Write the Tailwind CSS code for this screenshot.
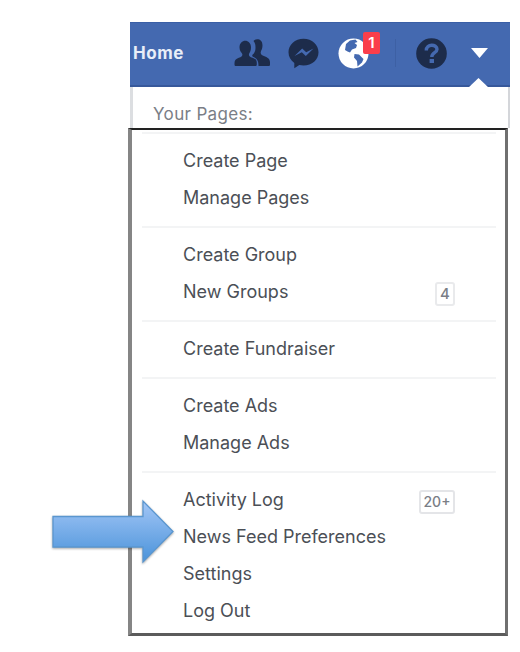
<!DOCTYPE html>
<html lang="en">
<head>
  <meta charset="UTF-8">
  <title>Account Menu</title>
  <script src="https://cdn.jsdelivr.net/npm/@tailwindcss/browser@4"></script>
</head>
<body class="bg-white h-[652px] overflow-hidden relative font-['Inter',sans-serif] text-[#4b4f56]">
  <div class="ml-[128px] pt-[22px] w-[382px]">

    <!-- Top bar -->
    <header class="relative ml-[2px] h-[65px] bg-[#4469b0] border-t border-b-2 border-t-[#3a5fa6] border-b-[#37589a]">
      <div class="flex items-center h-[60px]">
        <span class="ml-[3px] mt-[2px] w-[101px] text-[17px] font-bold tracking-[0.5px] text-[#e9eef8]">Home</span>
        <svg class="w-[36px] h-[30px]" viewBox="0 0 36 30" fill="#1d2c4b">
          <path d="M19.500 3C22 .2 28.500.5 28.500 7.500c0 3.500-1.400 5-1.800 6.500-.2 2.400.8 3 3.800 4.200 3.300 1.300 5.500 2.800 5.500 6.300v2c0 1-.6 1.500-1.500 1.500H24.500c0-5-1-7.500-6-9.500l-.3-1.500c2.200-1.500 3.300-4 3.300-7.500 0-3-.6-5-2-6.500z"/>
          <path d="M5.500 9.500c0-9 11.500-9 11.500 0 0 3.500-1.300 5-2 6.500-.3 2 .7 2.600 3.500 3.700 3 1.200 4.300 2.300 4.300 5.300v1.500c0 1-.6 1.500-1.500 1.500H2c-.9 0-1.500-.5-1.500-1.500V25c0-3 1.300-4.100 4.300-5.300 2.800-1.100 3.800-1.700 3.500-3.700-.8-1.500-2.800-3-2.800-6.500z"/>
        </svg>
        <svg class="ml-[18px] w-[31px] h-[31px]" viewBox="0 0 31 31">
          <path fill="#1d2c4b" d="M15.500.8C7 .8.500 6.700.500 14.300c0 4.400 2.200 8.100 5.800 10.700v5.300l5-3.300c1.300.3 2.700.5 4.200.5 8.500 0 15-5.900 15-13.300S24 .8 15.500.8z"/>
          <path fill="#4469b0" d="M6.500 18l7.700-7.500 4 3.700 7.300-3.700-7.700 7.500-4-3.700z"/>
        </svg>
        <div class="relative ml-[19px] w-[31px] h-[31px]">
          <svg class="w-[31px] h-[31px]" viewBox="0 0 31 31">
            <circle cx="15.500" cy="15.500" r="15" fill="#fff"/>
            <path fill="#4469b0" d="M8 6l4-3.500 5.500-1 2 2.500-3 1 2.500 2-1 3-4 1.500-2 3-2.500-1L7 12zM16.500 16l4.500.5 4.500 4.500-1.500 3.500-4.500 4-.5-5.500-3-3.500z"/>
          </svg>
          <span class="absolute left-[25px] -top-[6px] w-[17px] h-[22px] rounded-[2px] bg-[#fa3e4b] text-white text-[15px] leading-[21px] font-semibold text-center">1</span>
        </div>
        <span class="ml-[26px] w-px h-[28px] bg-[#3d60a4]"></span>
        <svg class="ml-[20px] w-[31px] h-[31px]" viewBox="0 0 31 31">
          <circle cx="15.500" cy="15.500" r="15.300" fill="#1d2c4b"/>
          <path fill="none" stroke="#4469b0" stroke-width="3.400" d="M10.300 12.500c0-7 10.700-6.500 10.700-1.200 0 3.700-5.200 3.200-5.200 7.700"/>
          <rect x="13.600" y="21" width="4.400" height="4" fill="#4469b0"/>
        </svg>
        <svg class="ml-[24px] w-[17px] h-[10px]" viewBox="0 0 17 10" fill="#fff"><path d="M0 0h17L8.500 10z"/></svg>
      </div>
      <svg class="absolute left-[338px] top-[55px] w-[21px] h-[10px]" viewBox="0 0 21 10" fill="#fff"><path d="M0 10L10.500 0 21 10z"/></svg>
    </header>

    <div class="ml-[2px] h-[41px] border-l-[3px] border-r-[2px] border-l-[#dcdee1] border-r-[#d4d6da] pl-[20px] pt-[15px]">
      <p class="text-[17px] leading-[24px] tracking-[0.35px] text-[#7a7e86]">Your Pages:</p>
    </div>

    <!-- Menu -->
    <nav class="w-[380px] h-[508px] border-t-2 border-l-[4px] border-b-[3px] border-r-[3px] border-t-[#222] border-l-[#858585] border-b-[#5b5b5b] border-r-[#707070] pt-[2px] pl-[10px] pr-[9px] text-[18px] leading-[37px]">
      <ul class="border-t-2 border-[#f3f4f5] pt-[8px] pb-[10px] pl-[41px] pr-[41px]">
        <li>Create Page</li>
        <li>Manage Pages</li>
      </ul>
      <ul class="border-t-2 border-[#f3f4f5] pt-[8px] pb-[10px] pl-[41px] pr-[41px]">
        <li>Create Group</li>
        <li class="flex items-center justify-between">New Groups
          <span class="mt-[4px] w-[20px] h-[24px] border-2 border-[#e9eaec] rounded-[3px] text-[15px] leading-[20px] font-medium text-center text-[#7a7e86]">4</span>
        </li>
      </ul>
      <ul class="border-t-2 border-[#f3f4f5] pt-[8px] pb-[10px] pl-[41px]">
        <li>Create Fundraiser</li>
      </ul>
      <ul class="border-t-2 border-[#f3f4f5] pt-[8px] pb-[10px] pl-[41px]">
        <li>Create Ads</li>
        <li>Manage Ads</li>
      </ul>
      <ul class="border-t-2 border-[#f3f4f5] pt-[8px] pb-[10px] pl-[41px] pr-[41px]">
        <li class="flex items-center justify-between">Activity Log
          <span class="mt-[5px] w-[36px] h-[24px] border-2 border-[#e4e5e8] rounded-[3px] text-[14px] leading-[20px] font-medium text-center text-[#7a7e86]">20+</span>
        </li>
        <li>News Feed Preferences</li>
        <li>Settings</li>
        <li>Log Out</li>
      </ul>
    </nav>
  </div>

  <!-- Pointer arrow over the menu edge -->
  <svg class="absolute left-[48px] top-[496px] w-[130px] h-[74px] drop-shadow-[0_1px_1px_rgba(0,0,0,0.35)]" viewBox="0 0 130 74">
    <defs>
      <linearGradient id="arrow" x1="0" y1="0" x2="0" y2="1">
        <stop offset="0" stop-color="#a3c6f6"/>
        <stop offset="1" stop-color="#4a93da"/>
      </linearGradient>
    </defs>
    <path d="M5 20.500H95V5L125 35.500 95 66V51H5z" fill="url(#arrow)" stroke="#5a96cf" stroke-width="1.300"/>
  </svg>
</body>
</html>
